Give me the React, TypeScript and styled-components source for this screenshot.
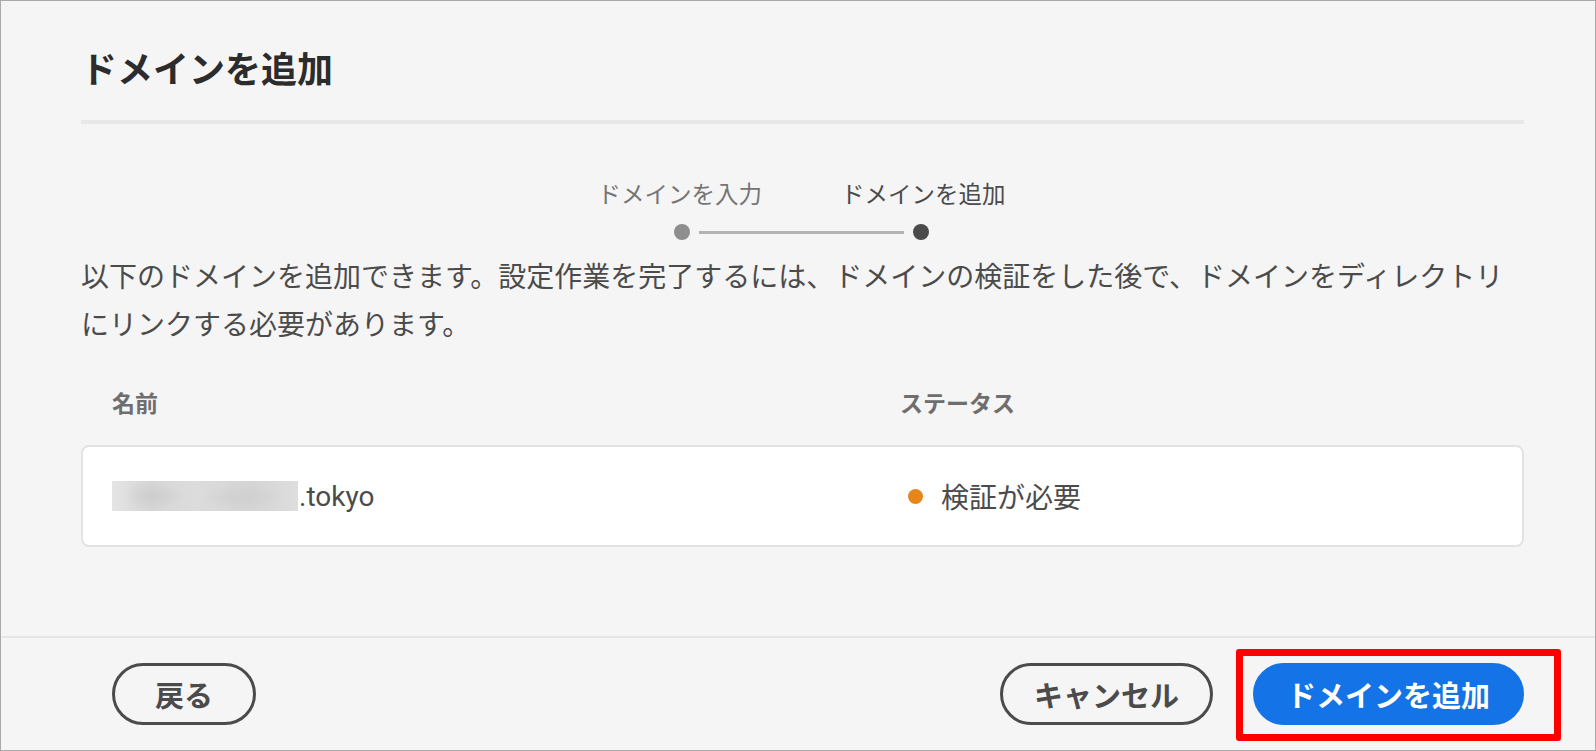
import React from "react"
import styled, { createGlobalStyle } from "styled-components"

const GlobalStyle = createGlobalStyle`
    html, body {
        margin: 0;
        padding: 0;
        background: #f4f4f4;
    }
    body {
        font-family: "Roboto", "Noto Sans CJK JP", sans-serif;
        color: #4b4b4b;
    }
    * {
        box-sizing: border-box;
    }
`

type Step = { label: string, active: boolean }
type Domain = { suffix: string, status: string }

const steps: Step[] = [
    { label: "ドメインを入力", active: false },
    { label: "ドメインを追加", active: true },
]

const domains: Domain[] = [
    { suffix: ".tokyo", status: "検証が必要" },
]

export default function App() {
    return (
        <>
            <GlobalStyle />
            <SFrame>
                <SMain>
                    <STitle>ドメインを追加</STitle>
                    <SDivider />
                    <SStepper>
                        <SStepLabels>
                            {steps.map(s => <SStepLabel key={s.label} active={s.active}>{s.label}</SStepLabel>)}
                        </SStepLabels>
                        <SStepTrack>
                            <SStepDot active={steps[0].active} />
                            <SStepLine />
                            <SStepDot active={steps[1].active} />
                        </SStepTrack>
                    </SStepper>
                    <SDescription>
                        以下のドメインを追加できます。設定作業を完了するには、ドメインの検証をした後で、ドメインをディレクトリにリンクする必要があります。
                    </SDescription>
                    <STableHead>
                        <span>名前</span>
                        <span>ステータス</span>
                    </STableHead>
                    {domains.map(d => (
                        <SRow key={d.suffix}>
                            <SName>
                                <SBlur />
                                {d.suffix}
                            </SName>
                            <SStatus>
                                <SStatusDot />
                                {d.status}
                            </SStatus>
                        </SRow>
                    ))}
                </SMain>
                <SFooter>
                    <SButton>戻る</SButton>
                    <SFooterRight>
                        <SButton>キャンセル</SButton>
                        <SHighlightWrap>
                            <SButton primary>ドメインを追加</SButton>
                            <SHighlight />
                        </SHighlightWrap>
                    </SFooterRight>
                </SFooter>
            </SFrame>
        </>
    )
}

const SFrame = styled.div`
    width: 1596px;
    height: 751px;
    border: 1px solid #a9a9a9;
    background: #f5f5f5;
    display: flex;
    flex-direction: column;
    overflow: hidden;
`
const SMain = styled.div`
    flex: 1;
    padding: 50px 71px 0 80px;
    display: flex;
    flex-direction: column;
`
const STitle = styled.h1`
    margin: 0;
    font-size: 36px;
    line-height: 40px;
    font-weight: 700;
    color: #2c2c2c;
`
const SDivider = styled.div`
    height: 4px;
    background: #e8e8e8;
    margin-top: 29px;
`
const SStepper = styled.div`
    align-self: center;
    width: 408px;
    margin-top: 57px;
    margin-left: -2px;
    display: flex;
    flex-direction: column;
    gap: 15px;
`
const SStepLabels = styled.div`
    display: flex;
    justify-content: space-between;
`
const SStepLabel = styled.span<{ active: boolean }>`
    font-size: 23.5px;
    line-height: 28px;
    color: ${p => p.active ? "#4b4b4b" : "#747474"};
`
const SStepTrack = styled.div`
    display: flex;
    align-items: center;
    padding: 0 77px 0 76px;
`
const SStepDot = styled.span<{ active: boolean }>`
    width: 16px;
    height: 16px;
    border-radius: 50%;
    background: ${p => p.active ? "#4b4b4b" : "#8e8e8e"};
`
const SStepLine = styled.span`
    flex: 1;
    height: 3px;
    margin: 0 9px;
    background: #b3b3b3;
`
const SDescription = styled.p`
    margin: 14px 0 0;
    font-size: 28px;
    line-height: 48px;
    color: #4b4b4b;
`
const STableHead = styled.div`
    display: grid;
    grid-template-columns: 788px 1fr;
    padding-left: 31px;
    margin-top: 41px;
    font-size: 23px;
    line-height: 28px;
    font-weight: 700;
    color: #6e6e6e;
`
const SRow = styled.div`
    display: grid;
    grid-template-columns: 788px 1fr;
    align-items: center;
    height: 102px;
    margin-top: 26px;
    padding-left: 29px;
    background: #ffffff;
    border: 2px solid #e3e3e3;
    border-radius: 8px;
    font-size: 28px;
    color: #4b4b4b;
`
const SName = styled.div`
    display: flex;
    align-items: center;
`
const SBlur = styled.span`
    width: 186px;
    height: 30px;
    margin-right: 1px;
    background:
        radial-gradient(ellipse 30px 14px at 22% 50%, #cdcdcd, transparent),
        radial-gradient(ellipse 40px 12px at 70% 55%, #d0d0d0, transparent),
        linear-gradient(90deg, #e4e4e4, #d6d6d6 20%, #dcdcdc 45%, #d4d4d4 75%, #dedede);
`
const SStatus = styled.div`
    display: flex;
    align-items: center;
    gap: 18px;
    padding-left: 8px;
`
const SStatusDot = styled.span`
    width: 15px;
    height: 15px;
    border-radius: 50%;
    background: #e68619;
`
const SFooter = styled.div`
    border-top: 2px solid #e6e6e6;
    padding: 25px 71px 25px 111px;
    display: flex;
    justify-content: space-between;
    align-items: center;
`
const SFooterRight = styled.div`
    display: flex;
    align-items: center;
    gap: 40px;
`
const SButton = styled.button<{ primary?: boolean }>`
    height: 62px;
    min-width: 144px;
    padding: 0 31px;
    border-radius: 31px;
    border: 3px solid ${p => p.primary ? "#1473e6" : "#4b4b4b"};
    background: ${p => p.primary ? "#1473e6" : "transparent"};
    color: ${p => p.primary ? "#ffffff" : "#4b4b4b"};
    font-family: "Noto Sans CJK JP", sans-serif;
    font-size: 29px;
    font-weight: 700;
    line-height: 1;
    cursor: pointer;
`
const SHighlightWrap = styled.span`
    position: relative;
    display: inline-flex;
`
const SHighlight = styled.span`
    position: absolute;
    left: -17px;
    right: -37px;
    top: -14px;
    bottom: -16px;
    border: 7px solid #ff0000;
    border-radius: 3px;
    pointer-events: none;
`
